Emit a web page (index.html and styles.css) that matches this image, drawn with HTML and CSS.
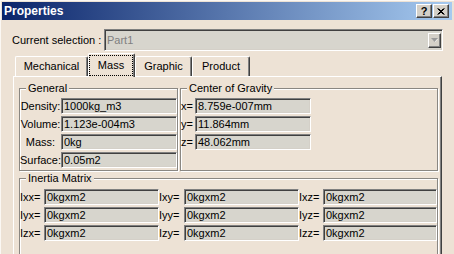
FILE: index.html
```html
<!DOCTYPE html>
<html>
<head>
<meta charset="utf-8">
<link rel="stylesheet" href="styles.css">
</head>
<body>
<div class="window">
  <div class="titlebar">
    <span class="title">Properties</span>
    <div class="tbtns">
      <span class="tbtn help">?</span>
      <span class="tbtn close"><svg width="8" height="7" viewBox="0 0 8 7"><path d="M0.5 0.5L6.5 6.5M1.5 0.5L7.5 6.5M6.5 0.5L0.5 6.5M7.5 0.5L1.5 6.5" stroke="#000" stroke-width="1" fill="none"/></svg></span>
    </div>
  </div>
  <div class="selrow">
    <span class="sellabel">Current selection :</span>
    <div class="combo">
      <span class="combotext">Part1</span>
      <span class="ddbtn"><svg width="7" height="5" viewBox="0 0 7 5"><path d="M1 1h6l-3 3z" fill="#fff"/><path d="M0 0h7l-3.5 4z" fill="#9a9a9a"/></svg></span>
    </div>
  </div>
  <div class="tabs">
    <div class="tab t-mech">Mechanical</div>
    <div class="tab tab-active t-mass"><span class="focus">Mass</span></div>
    <div class="tab t-graphic">Graphic</div>
    <div class="tab t-product">Product</div>
  </div>
  <div class="panel">
    <div class="grouprow">
      <fieldset class="group general">
        <legend>General</legend>
        <div class="grid grid-general">
          <span class="lbl">Density:</span><span class="field">1000kg_m3</span>
          <span class="lbl">Volume:</span><span class="field">1.123e-004m3</span>
          <span class="lbl">Mass:</span><span class="field">0kg</span>
          <span class="lbl">Surface:</span><span class="field">0.05m2</span>
        </div>
      </fieldset>
      <fieldset class="group cog">
        <legend>Center of Gravity</legend>
        <div class="grid grid-cog">
          <span class="lbl lbl-left">x=</span><span class="field">8.759e-007mm</span>
          <span class="lbl lbl-left">y=</span><span class="field">11.864mm</span>
          <span class="lbl lbl-left">z=</span><span class="field">48.062mm</span>
        </div>
      </fieldset>
    </div>
    <fieldset class="group inertia">
      <legend>Inertia Matrix</legend>
      <div class="grid grid-inertia">
        <span class="lbl lbl-left">Ixx=</span><span class="field">0kgxm2</span>
        <span class="lbl lbl-left">Ixy=</span><span class="field">0kgxm2</span>
        <span class="lbl lbl-left">Ixz=</span><span class="field">0kgxm2</span>
        <span class="lbl lbl-left">Iyx=</span><span class="field">0kgxm2</span>
        <span class="lbl lbl-left">Iyy=</span><span class="field">0kgxm2</span>
        <span class="lbl lbl-left">Iyz=</span><span class="field">0kgxm2</span>
        <span class="lbl lbl-left">Izx=</span><span class="field">0kgxm2</span>
        <span class="lbl lbl-left">Izy=</span><span class="field">0kgxm2</span>
        <span class="lbl lbl-left">Izz=</span><span class="field">0kgxm2</span>
      </div>
    </fieldset>
  </div>
</div>
</body>
</html>
```
FILE: styles.css
```css
* { box-sizing: border-box; }
html, body { margin: 0; padding: 0; }
body {
  background: #ede2d5;
  font-family: "Liberation Sans", Arial, sans-serif;
  font-size: 11px;
  color: #000;
}
.window {
  width: 454px;
  height: 254px;
  overflow: hidden;
  padding: 2px 2px 0 2px;
  background: #ede2d5;
  box-shadow: inset 1px 1px #fbf8f4;
}
.titlebar {
  height: 18px;
  display: flex;
  align-items: center;
  justify-content: space-between;
  padding: 0 3px 0 2px;
  background: linear-gradient(to right, #0a246a, #a6caf0);
}
.title {
  color: #fff;
  font-weight: bold;
  font-size: 12px;
  line-height: 14px;
}
.tbtns { display: flex; gap: 1px; }
.tbtn {
  width: 16px;
  height: 14px;
  display: flex;
  align-items: center;
  justify-content: center;
  background: #d4d0c8;
  border: 1px solid;
  border-color: #fff #404040 #404040 #fff;
  box-shadow: inset -1px -1px #808080;
  font-weight: bold;
  font-size: 11px;
  line-height: 12px;
}
.selrow {
  display: flex;
  align-items: center;
  height: 22px;
  margin: 9px 9px 0 10px;
}
.sellabel { width: 92px; white-space: nowrap; }
.combo {
  flex: 1;
  height: 22px;
  display: flex;
  align-items: center;
  justify-content: space-between;
  background: #d7d5cd;
  border: 1px solid;
  border-color: #808080 #fff #fff #808080;
  box-shadow: inset 1px 1px #404040, inset -1px -1px #d4d0c8;
  padding-left: 2px;
}
.combotext { color: #808080; }
.ddbtn {
  width: 13px;
  height: 15px;
  margin-right: 1px;
  display: flex;
  align-items: center;
  justify-content: center;
  background: #d4d0c8;
  border: 1px solid;
  border-color: #fff #404040 #404040 #fff;
  box-shadow: inset -1px -1px #808080;
}
.tabs {
  display: flex;
  align-items: flex-end;
  height: 23px;
  margin: 2px 0 0 13px;
}
.tab {
  height: 20px;
  line-height: 19px;
  text-align: center;
  white-space: nowrap;
  background: #ede2d5;
  border-top: 1px solid #fff;
  border-left: 1px solid #fff;
  border-right: 1px solid #404040;
  border-radius: 2px 2px 0 0;
  box-shadow: inset -1px 0 #808080;
}
.t-mech { width: 73px; }
.t-mass { width: 47px; }
.t-graphic { width: 57px; }
.t-product { width: 58px; }
.tab-active {
  height: 24px;
  margin-bottom: -1px;
  position: relative;
  z-index: 1;
  padding-top: 1px;
}
.focus {
  display: block;
  height: 21px;
  margin-right: 1px;
  line-height: 19px;
  border: 1px dotted #000;
}
.panel {
  width: 429px;
  height: 200px;
  margin-left: 11px;
  border-top: 1px solid #fff;
  border-left: 1px solid #fff;
  border-right: 1px solid #404040;
  box-shadow: inset -1px 0 #808080;
  padding: 5px 3px 0 5px;
}
.grouprow { display: flex; }
.group {
  margin: 0;
  min-width: 0;
  padding: 4px 0 2px 0;
  border: 1px solid #8a8782;
  box-shadow: inset 1px 1px #fff, 1px 1px #fff;
}
.group legend {
  margin-left: 6px;
  padding: 0 2px;
  line-height: 12px;
  background: #ede2d5;
}
.general { width: 159px; flex: none; }
.cog { flex: 1; margin-left: 2px; }
.inertia { margin-top: 1px; padding-top: 5px; padding-bottom: 30px; }
.grid {
  display: grid;
  grid-auto-rows: 16px;
  row-gap: 2px;
  align-items: center;
}
.grid-general { grid-template-columns: 41px 1fr; }
.grid-cog { grid-template-columns: 14px 116px; }
.grid-inertia { grid-template-columns: 24px 115px 25px 115px 24px 1fr; }
.lbl { text-align: center; white-space: nowrap; line-height: 14px; }
.lbl-left { text-align: left; }
.field {
  height: 16px;
  background: #d7d5cd;
  border: 1px solid;
  border-color: #808080 #fff #fff #808080;
  box-shadow: inset 1px 1px #404040, inset -1px -1px #d4d0c8;
  padding-left: 2px;
  line-height: 14px;
  white-space: nowrap;
  overflow: hidden;
}
```
